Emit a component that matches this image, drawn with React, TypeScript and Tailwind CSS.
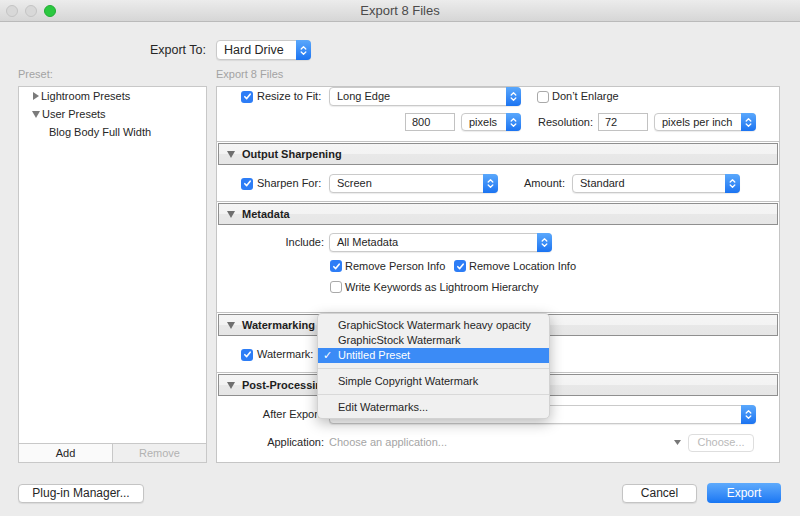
import React from 'react';

const Chevrons = () => (
  <svg width="7" height="11" viewBox="0 0 7 11" fill="none" stroke="white" strokeWidth="1.3" strokeLinecap="round" strokeLinejoin="round">
    <path d="M1.2 4 L3.5 1.8 L5.8 4" />
    <path d="M1.2 7 L3.5 9.2 L5.8 7" />
  </svg>
);

function Popup({ label, className = '' }: { label: string; className?: string }) {
  return (
    <div className={`flex items-stretch h-[19px] rounded-[4px] bg-white border border-[#cacaca] shadow-[0_1px_1px_rgba(0,0,0,0.08)] ${className}`}>
      <span className="flex-1 flex items-center pl-[7px] overflow-hidden whitespace-nowrap">{label}</span>
      <span className="w-[15px] -my-px -mr-px rounded-r-[4px] bg-gradient-to-b from-[#5aa8fc] to-[#1a73f1] flex items-center justify-center">
        <Chevrons />
      </span>
    </div>
  );
}

function Check({ on }: { on: boolean }) {
  if (!on) return <span className="w-[12px] h-[12px] shrink-0 rounded-[3px] bg-white border border-[#a9a9a9]" />;
  return (
    <span className="w-[12px] h-[12px] shrink-0 rounded-[3px] bg-[#2d7df6] flex items-center justify-center">
      <svg width="9" height="9" viewBox="0 0 9 9" fill="none" stroke="white" strokeWidth="1.6" strokeLinecap="round" strokeLinejoin="round">
        <path d="M1.8 4.7 L3.7 6.6 L7.2 2.2" />
      </svg>
    </span>
  );
}

function Field({ value, className = '' }: { value: string; className?: string }) {
  return (
    <div className={`h-[18px] bg-white border border-[#c2c2c2] flex items-center pl-[6px] ${className}`}>{value}</div>
  );
}

function Header({ title }: { title: string }) {
  return (
    <div className="border-t border-[#c4c4c4] pt-[1px]">
      <div className="mx-[1px] h-[22px] border border-[#8f8f8f] bg-[linear-gradient(#f5f5f5_0%,#f3f3f3_50%,#e8e8e8_50%,#e6e6e6_100%)] flex items-center pl-[8px] gap-[7px] font-bold text-[#1e1e1e]">
        <svg width="8" height="7" viewBox="0 0 8 7">
          <path d="M0 0 H8 L4 7 Z" fill="#6f6f6f" />
        </svg>
        {title}
      </div>
    </div>
  );
}

function CheckLabel({ label, on = true }: { label: string; on?: boolean }) {
  return (
    <div className="w-[112px] shrink-0 flex items-center pl-[24px] gap-[4px]">
      <Check on={on} />
      <span>{label}</span>
    </div>
  );
}

function RightLabel({ label }: { label: string }) {
  return <div className="w-[112px] shrink-0 text-right pr-[5px]">{label}</div>;
}

export default function App() {
  return (
    <div className="relative w-[800px] h-[516px] bg-[#ececec] flex flex-col overflow-hidden font-['Liberation_Sans',Arial,sans-serif] text-[11px] text-[#262626]">
      {/* title bar */}
      <div className="h-[22px] shrink-0 grid grid-cols-[1fr_auto_1fr] items-center bg-gradient-to-b from-[#ececec] to-[#d6d6d6] border-b border-[#bababa]">
        <div className="flex items-center pl-[6px] gap-[7px]">
          <span className="w-[12px] h-[12px] rounded-full bg-[#d8d8d8] border border-[#c4c4c4]" />
          <span className="w-[12px] h-[12px] rounded-full bg-[#d8d8d8] border border-[#c4c4c4]" />
          <span className="w-[12px] h-[12px] rounded-full bg-[#2bc840] border border-[#22ad35]" />
        </div>
        <div className="text-[13px] text-[#4b4b4b]">Export 8 Files</div>
        <div />
      </div>

      {/* export to */}
      <div className="mt-[18px] h-[20px] flex items-center pl-[18px] gap-[9px]">
        <div className="w-[189px] text-right text-[12.5px] pr-[1px]">Export To:</div>
        <div className="w-[95px] h-[20px] flex items-stretch rounded-[4px] bg-white border border-[#cacaca] shadow-[0_1px_1px_rgba(0,0,0,0.08)] text-[12.5px]">
          <span className="flex-1 flex items-center pl-[7px]">Hard Drive</span>
          <span className="w-[15px] -my-px -mr-px rounded-r-[4px] bg-gradient-to-b from-[#5aa8fc] to-[#1a73f1] flex items-center justify-center">
            <Chevrons />
          </span>
        </div>
      </div>

      {/* column labels */}
      <div className="h-[26px] flex items-center pt-[2px] pl-[18px] gap-[9px] text-[#a3a3a3]">
        <div className="w-[189px]">Preset:</div>
        <div>Export 8 Files</div>
      </div>

      {/* panels */}
      <div className="h-[377px] flex pl-[18px] gap-[9px]">
        <div className="w-[189px] bg-white border border-[#c8c8c8] flex flex-col">
          <div className="flex-1 text-[#262626]">
            <div className="h-[18px] flex items-center pl-[14px] gap-[2px]">
              <svg width="6" height="8" viewBox="0 0 6 8">
                <path d="M0 0 L6 4 L0 8 Z" fill="#7b7b7b" />
              </svg>
              <span>Lightroom Presets</span>
            </div>
            <div className="h-[18px] flex items-center pl-[13px] gap-[2px]">
              <svg width="8" height="7" viewBox="0 0 8 7">
                <path d="M0 0 H8 L4 7 Z" fill="#7b7b7b" />
              </svg>
              <span>User Presets</span>
            </div>
            <div className="h-[18px] flex items-center pl-[30px]">Blog Body Full Width</div>
          </div>
          <div className="h-[19px] flex border-t border-[#c8c8c8]">
            <div className="w-[94px] flex items-center justify-center bg-[#fafafa] border-r border-[#c8c8c8]">Add</div>
            <div className="flex-1 flex items-center justify-center bg-[#efefef] text-[#b2b2b2]">Remove</div>
          </div>
        </div>

        <div className="w-[564px] bg-white border border-[#c5c5c5] flex flex-col">
          {/* image sizing (scrolled) */}
          <div className="h-[54px] shrink-0">
            <div className="h-[19px] flex items-center">
              <CheckLabel label="Resize to Fit:" />
              <Popup label="Long Edge" className="w-[192px]" />
              <div className="ml-[16px] flex items-center gap-[3px]">
                <Check on={false} />
                <span>Don’t Enlarge</span>
              </div>
            </div>
            <div className="mt-[7px] h-[18px] flex items-center pl-[188px]">
              <Field value="800" className="w-[50px]" />
              <Popup label="pixels" className="ml-[6px] w-[60px] !h-[18px]" />
              <span className="ml-[17px] w-[60px]">Resolution:</span>
              <Field value="72" className="w-[50px]" />
              <Popup label="pixels per inch" className="ml-[6px] w-[102px] !h-[18px]" />
            </div>
          </div>

          <Header title="Output Sharpening" />
          <div className="h-[36px] shrink-0 pt-[9px]">
            <div className="h-[19px] flex items-center">
              <CheckLabel label="Sharpen For:" />
              <Popup label="Screen" className="w-[169px]" />
              <span className="ml-[26px] w-[48px]">Amount:</span>
              <Popup label="Standard" className="w-[168px]" />
            </div>
          </div>

          <Header title="Metadata" />
          <div className="h-[87px] shrink-0 pt-[8px]">
            <div className="h-[19px] flex items-center">
              <RightLabel label="Include:" />
              <Popup label="All Metadata" className="w-[223px]" />
            </div>
            <div className="mt-[7px] h-[14px] flex items-center pl-[113px]">
              <Check on />
              <span className="ml-[3px] w-[109px]">Remove Person Info</span>
              <Check on />
              <span className="ml-[3px]">Remove Location Info</span>
            </div>
            <div className="mt-[7px] h-[14px] flex items-center pl-[113px]">
              <Check on={false} />
              <span className="ml-[3px]">Write Keywords as Lightroom Hierarchy</span>
            </div>
          </div>

          <Header title="Watermarking" />
          <div className="h-[36px] shrink-0 pt-[9px]">
            <div className="h-[19px] flex items-center">
              <CheckLabel label="Watermark:" />
              <Popup label="" className="w-[221px]" />
            </div>
          </div>

          <Header title="Post-Processing" />
          <div className="flex-1 pt-[9px]">
            <div className="h-[19px] flex items-center pr-[23px]">
              <RightLabel label="After Export:" />
              <Popup label="" className="flex-1" />
            </div>
            <div className="mt-[9px] h-[19px] flex items-center pr-[25px]">
              <RightLabel label="Application:" />
              <span className="flex-1 text-[#a5a5a5]">Choose an application...</span>
              <svg width="7" height="5" viewBox="0 0 7 5">
                <path d="M0 0 H7 L3.5 5 Z" fill="#777" />
              </svg>
              <div className="ml-[7px] w-[66px] h-[18px] rounded-[4px] border border-[#dedede] bg-white flex items-center justify-center text-[#b9b9b9]">Choose...</div>
            </div>
          </div>
        </div>
      </div>

      {/* bottom buttons */}
      <div className="mt-[20px] h-[20px] flex items-center pl-[18px] pr-[19px]">
        <div className="w-[126px] h-[19px] rounded-[4px] bg-white border border-[#c4c4c4] shadow-[0_1px_1px_rgba(0,0,0,0.08)] flex items-center justify-center text-[12px]">Plug-in Manager...</div>
        <div className="flex-1" />
        <div className="w-[75px] h-[19px] rounded-[4px] bg-white border border-[#c4c4c4] shadow-[0_1px_1px_rgba(0,0,0,0.08)] flex items-center justify-center text-[12px]">Cancel</div>
        <div className="ml-[10px] w-[74px] h-[20px] rounded-[4px] bg-gradient-to-b from-[#5eaafc] to-[#1776f3] flex items-center justify-center text-[12px] text-white">Export</div>
      </div>

      {/* watermark popup menu */}
      <div className="absolute left-[317px] top-[313px] w-[233px] pt-[4px] pb-[3px] rounded-[5px] bg-[#f0f0f0] border border-[#d2d2d2] shadow-[0_4px_14px_rgba(0,0,0,0.28)]">
        <div className="h-[15px] flex items-center pl-[20px]">GraphicStock Watermark heavy opacity</div>
        <div className="h-[15px] flex items-center pl-[20px]">GraphicStock Watermark</div>
        <div className="h-[15px] flex items-center bg-[#3b8bf6] text-white">
          <span className="w-[20px] pl-[5px]">✓</span>
          <span>Untitled Preset</span>
        </div>
        <div className="my-[5px] h-[1px] bg-[#d9d9d9]" />
        <div className="h-[15px] flex items-center pl-[20px]">Simple Copyright Watermark</div>
        <div className="my-[5px] h-[1px] bg-[#d9d9d9]" />
        <div className="h-[15px] flex items-center pl-[20px]">Edit Watermarks...</div>
      </div>
    </div>
  );
}
